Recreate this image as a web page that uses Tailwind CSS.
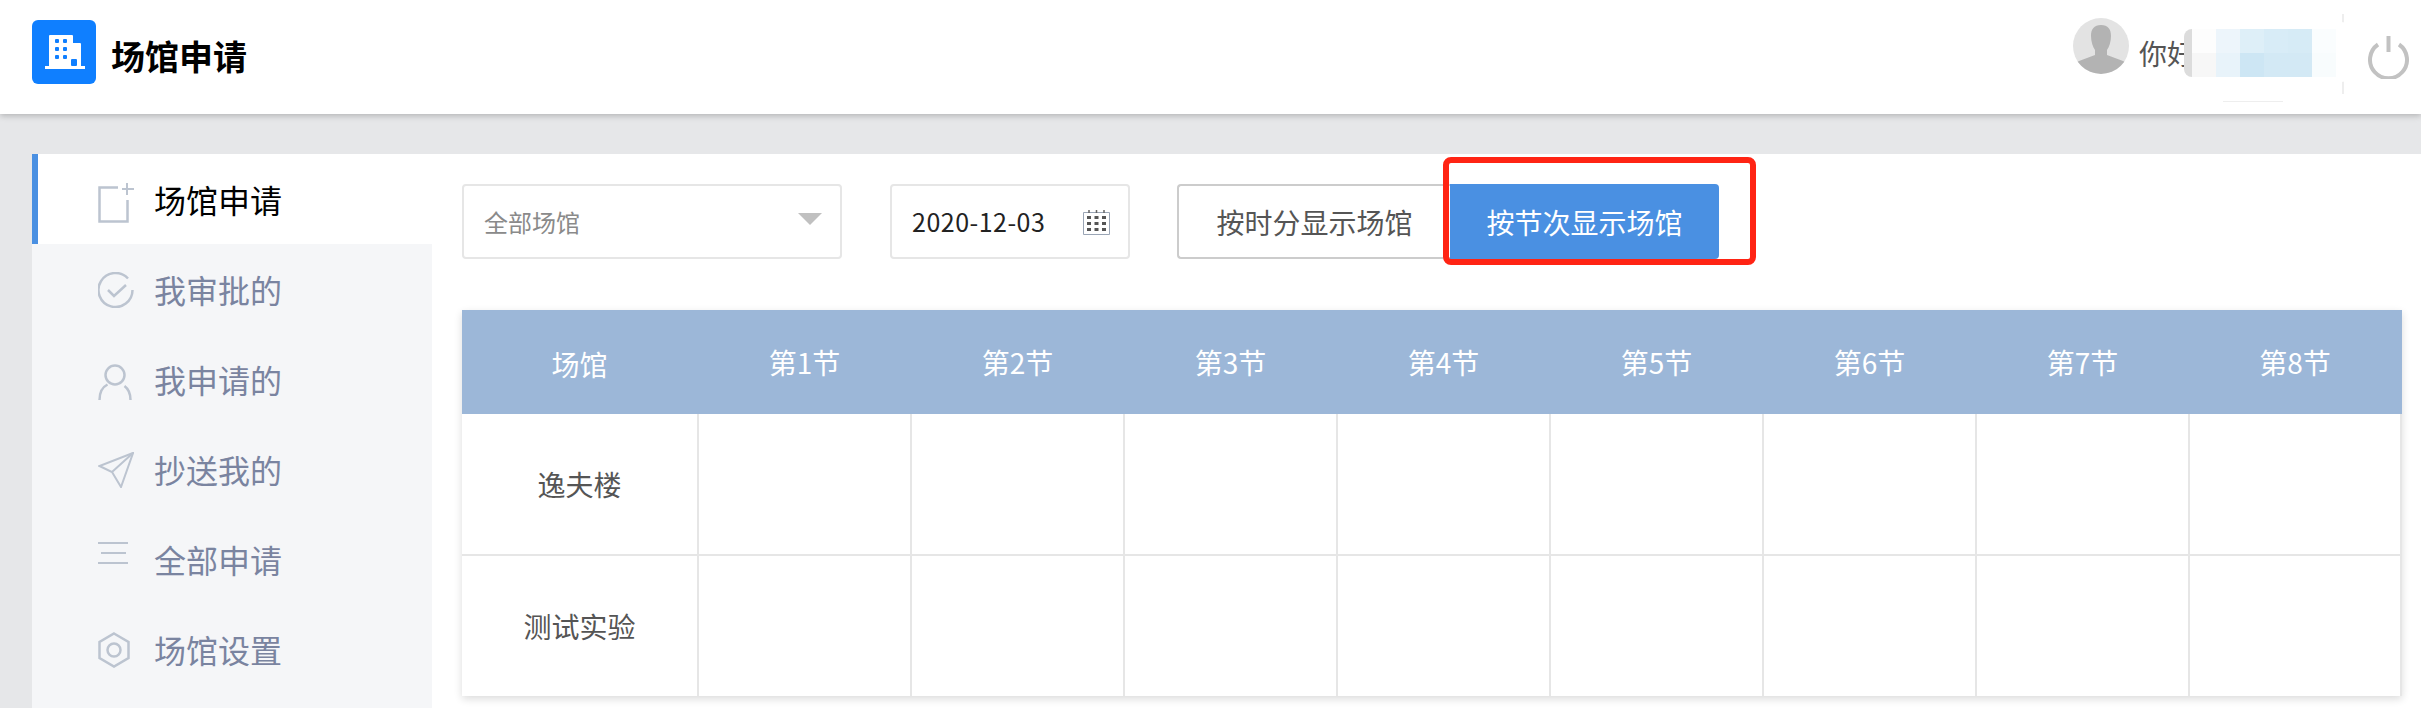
<!DOCTYPE html>
<html lang="zh-CN">
<head>
    <meta charset="UTF-8">
    <meta name="viewport" content="width=device-width, initial-scale=1.0">
    <title>场馆申请</title>
    <script src="https://cdn.jsdelivr.net/npm/@tailwindcss/browser@4"></script>
</head>
<body class="bg-[#e6e7e9] font-['Noto_Sans_CJK_SC','Noto_Sans',sans-serif]">

<div class="flex flex-col h-[708px] overflow-hidden">

    <!-- Top bar -->
    <header class="relative z-10 flex h-[114px] shrink-0 bg-white pl-[32px] pr-[12px] shadow-[0_2px_6px_rgba(0,0,0,0.22)]">
        <div class="mt-[20px] w-[64px] h-[64px] rounded-[6px] bg-[#0f7fff]">
            <svg width="64" height="64" viewBox="0 0 64 64">
                <path fill="#fff" d="M17 46V16a1 1 0 0 1 1-1h22a1 1 0 0 1 1 1v7h7a1 1 0 0 1 1 1v22h4v3H13v-3z"/>
                <g fill="#0f7fff">
                    <rect x="23" y="19" width="4" height="4" rx="1"/><rect x="31" y="19" width="4" height="4" rx="1"/>
                    <rect x="23" y="27" width="4" height="4" rx="1"/><rect x="31" y="27" width="4" height="4" rx="1"/>
                    <rect x="23" y="35" width="4" height="4" rx="1"/><rect x="31" y="35" width="4" height="4" rx="1"/>
                    <rect x="39" y="39" width="6" height="7" rx="1"/>
                </g>
            </svg>
        </div>
        <h1 class="ml-[15px] mt-[35px] text-[34px] leading-[42px] font-bold text-black">场馆申请</h1>

        <div class="ml-auto flex items-start">
            <div class="mt-[18px] w-[56px] h-[56px] rounded-full bg-[#e3e3e3] overflow-hidden">
                <svg width="56" height="56" viewBox="0 0 56 56">
                    <path fill="#b3b3b3" d="M28 7c7 0 10 4 10 11 0 6-2 11-4 14v5l16 6c2 1 3 2 4 3-5 7-14 10-26 10S7 53 2 46c1-1 2-2 4-3l16-6v-5c-2-3-4-8-4-14 0-7 3-11 10-11z"/>
                </svg>
            </div>
            <span class="ml-[10px] mt-[33px] text-[28px] leading-[40px] text-[#555]">你好</span>

            <!-- blurred user name -->
            <div class="relative w-[173px] h-[114px]">
                <div class="absolute left-[147px] top-[14px] w-[2px] h-[80px] bg-[#eeeeee]"></div>
                <div class="absolute left-[-11px] top-[3px] w-[157px] h-[99px] bg-white">
                    <div class="absolute left-[157px] top-[19px] w-[11px] h-[60px] rounded-r-full bg-white"></div>
                    <div class="absolute left-0 top-[26px] w-[8px] h-[48px] rounded-l-full bg-[#dcdcdc]"></div>
                    <div class="absolute left-[8px] top-[26px] grid grid-cols-[repeat(6,24px)] grid-rows-[repeat(2,24px)]">
                        <div class="bg-[#fdfdfd]"></div><div class="bg-[#edf5fb]"></div><div class="bg-[#deeff8]"></div><div class="bg-[#d8ecf7]"></div><div class="bg-[#d6ebf6]"></div><div class="bg-[#fafdfe]"></div>
                        <div class="bg-[#f7f7f7]"></div><div class="bg-[#e8f3fa]"></div><div class="bg-[#cde6f4]"></div><div class="bg-[#d3e9f5]"></div><div class="bg-[#d3e9f5]"></div><div class="bg-[#f8fcfd]"></div>
                    </div>
                    <div class="absolute left-[39px] bottom-0 w-[60px] h-px bg-[#eeeeee]"></div>
                </div>
            </div>

            <svg class="mt-[36px]" width="41" height="43" viewBox="0 0 41 43" fill="none" stroke="#c2c2c2" stroke-width="4">
                <path d="M20.500 0v16"/>
                <path d="M10 8.500a18.500 18.500 0 1 0 21 0"/>
            </svg>
        </div>
    </header>

    <div class="flex flex-1 pt-[40px] pl-[32px]">

        <!-- Side menu -->
        <nav class="w-[400px] shrink-0 bg-[#f5f6f8] text-[32px] leading-[44px] text-[#7a84a0]">
            <a class="flex items-center h-[90px] bg-white border-l-[6px] border-[#4a90e2] pl-[60px] text-black">
                <svg class="w-[36px] h-[40px] mt-[8px]" viewBox="0 0 36 40" fill="none" stroke="#bcc4d0" stroke-width="2.500">
                    <path d="M20 4.500H1.500v34h28V17"/>
                    <path stroke-width="2" d="M29 0v12M24 6h12"/>
                </svg>
                <span class="ml-[20px]">场馆申请</span>
            </a>
            <a class="flex items-center h-[90px] pl-[66px]">
                <svg class="w-[36px] h-[36px] mt-[2px]" viewBox="0 0 36 36" fill="none" stroke="#bcc4d0" stroke-width="2.500">
                    <path d="M30 6.500A17 17 0 1 0 34.500 18"/>
                    <path d="M10 18l6 6 12-11"/>
                </svg>
                <span class="ml-[20px]">我审批的</span>
            </a>
            <a class="flex items-center h-[90px] pl-[66px]">
                <svg class="w-[36px] h-[38px] mt-[5px]" viewBox="0 0 36 38" fill="none" stroke="#bcc4d0" stroke-width="2.500">
                    <circle cx="17" cy="12" r="9.500"/>
                    <path d="M1.500 37c0-8 3-13 8-15.500M32.500 37c0-7-2-11-6-14"/>
                </svg>
                <span class="ml-[20px]">我申请的</span>
            </a>
            <a class="flex items-center h-[90px] pl-[66px]">
                <svg class="w-[36px] h-[36px] mt-[2px]" viewBox="0 0 36 36" fill="none" stroke="#bcc4d0" stroke-width="2">
                    <path d="M35 1L1.500 14 14 20l9 15z"/>
                    <path d="M35 1L14 20"/>
                </svg>
                <span class="ml-[20px]">抄送我的</span>
            </a>
            <a class="flex items-center h-[90px] pl-[66px]">
                <svg class="w-[36px] h-[24px] mb-[12px]" viewBox="0 0 36 24" fill="none" stroke="#bcc4d0" stroke-width="2">
                    <path d="M0 2h30M3 12h25M0 22h30"/>
                </svg>
                <span class="ml-[20px]">全部申请</span>
            </a>
            <a class="flex items-center h-[90px] pl-[66px]">
                <svg class="w-[36px] h-[36px] mt-[2px]" viewBox="0 0 36 36" fill="none" stroke="#bcc4d0" stroke-width="2.500">
                    <path d="M16 1.500l14.500 8.500v16L16 34.500 1.500 26V10z"/>
                    <circle cx="16" cy="18" r="6.500"/>
                </svg>
                <span class="ml-[20px]">场馆设置</span>
            </a>
        </nav>

        <!-- Main -->
        <main class="flex-1 bg-white pl-[30px] pt-[30px]">
            <div class="flex items-start h-[75px]">
                <div class="flex items-center justify-between w-[380px] h-[75px] border-2 border-[#e6e6e6] rounded-[4px] pl-[20px] pr-[18px] text-[24px] text-[#8a8a8a]">
                    <span>全部场馆</span>
                    <span class="mb-[6px] w-0 h-0 border-x-[12px] border-t-[12px] border-x-transparent border-t-[#c0c0c0]"></span>
                </div>

                <div class="flex items-center ml-[48px] w-[240px] h-[75px] border-2 border-[#e6e6e6] rounded-[4px] pl-[20px] text-[25px] tracking-[0.5px] text-[#222]">
                    <span>2020-12-03</span>
                    <svg class="ml-[38px] mt-[2px]" width="27" height="25" viewBox="0 0 27 25" fill="none">
                        <path stroke="#9aa5b5" d="M.5 2.500h26v22H.5z"/>
                        <path stroke="#666" stroke-width="1.500" d="M6 0v3M13.500 0v3M21 0v3"/>
                        <g fill="#555">
                            <rect x="4" y="6" width="4" height="3"/><rect x="11.500" y="6" width="4" height="3"/><rect x="19" y="6" width="4" height="3"/>
                            <rect x="4" y="12" width="4" height="3"/><rect x="11.500" y="12" width="4" height="3"/><rect x="19" y="12" width="4" height="3"/>
                            <rect x="4" y="18" width="4" height="3"/><rect x="11.500" y="18" width="4" height="3"/><rect x="19" y="18" width="4" height="3"/>
                        </g>
                    </svg>
                </div>

                <button class="ml-[47px] w-[273px] h-[75px] border-2 border-r-0 border-[#cccccc] rounded-l-[4px] text-[28px] text-[#555]">按时分显示场馆</button>
                <div class="relative">
                    <button class="w-[269px] h-[75px] bg-[#4a90e2] rounded-r-[4px] text-[28px] text-white">按节次显示场馆</button>
                    <!-- red annotation box -->
                    <div class="absolute -left-[7px] -right-[37px] -top-[27px] -bottom-[6px] border-[6px] border-[#ff2414] rounded-[8px]"></div>
                </div>
            </div>

            <!-- Timetable -->
            <div class="mt-[51px] w-[1940px] shadow-[0_3px_8px_rgba(0,0,0,0.14)] text-[28px]">
                <div class="grid grid-cols-[237px_repeat(7,213px)_212px] h-[104px] bg-[#9cb7d8] text-white text-center">
                    <div class="flex items-center justify-center border-r-2 border-transparent pt-[4px]">场馆</div>
                    <div class="flex items-center justify-center border-r-2 border-transparent">第1节</div>
                    <div class="flex items-center justify-center border-r-2 border-transparent">第2节</div>
                    <div class="flex items-center justify-center border-r-2 border-transparent">第3节</div>
                    <div class="flex items-center justify-center border-r-2 border-transparent">第4节</div>
                    <div class="flex items-center justify-center border-r-2 border-transparent">第5节</div>
                    <div class="flex items-center justify-center border-r-2 border-transparent">第6节</div>
                    <div class="flex items-center justify-center border-r-2 border-transparent">第7节</div>
                    <div class="flex items-center justify-center border-r-2 border-transparent">第8节</div>
                </div>
                <div class="grid grid-cols-[237px_repeat(7,213px)_212px] h-[142px] border-b-2 border-[#e6e6e6] text-[#555]">
                    <div class="flex items-center justify-center border-r-2 border-[#e6e6e6]">逸夫楼</div>
                    <div class="border-r-2 border-[#e6e6e6]"></div>
                    <div class="border-r-2 border-[#e6e6e6]"></div>
                    <div class="border-r-2 border-[#e6e6e6]"></div>
                    <div class="border-r-2 border-[#e6e6e6]"></div>
                    <div class="border-r-2 border-[#e6e6e6]"></div>
                    <div class="border-r-2 border-[#e6e6e6]"></div>
                    <div class="border-r-2 border-[#e6e6e6]"></div>
                    <div class="border-r-2 border-[#e6e6e6]"></div>
                </div>
                <div class="grid grid-cols-[237px_repeat(7,213px)_212px] h-[140px] text-[#555]">
                    <div class="flex items-center justify-center border-r-2 border-[#e6e6e6]">测试实验</div>
                    <div class="border-r-2 border-[#e6e6e6]"></div>
                    <div class="border-r-2 border-[#e6e6e6]"></div>
                    <div class="border-r-2 border-[#e6e6e6]"></div>
                    <div class="border-r-2 border-[#e6e6e6]"></div>
                    <div class="border-r-2 border-[#e6e6e6]"></div>
                    <div class="border-r-2 border-[#e6e6e6]"></div>
                    <div class="border-r-2 border-[#e6e6e6]"></div>
                    <div class="border-r-2 border-[#e6e6e6]"></div>
                </div>
            </div>
        </main>
    </div>
</div>

</body>
</html>
